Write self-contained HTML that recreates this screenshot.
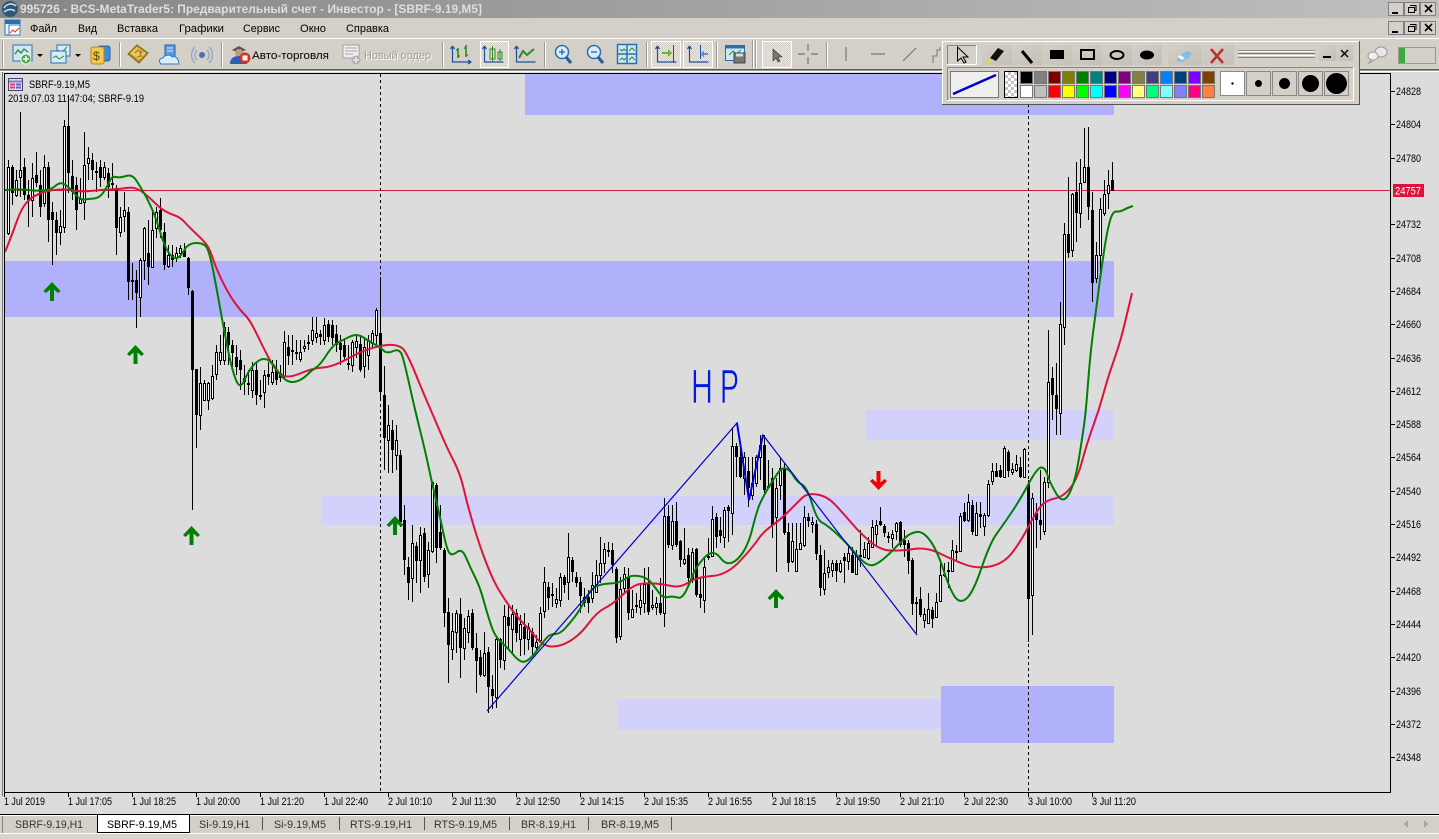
<!DOCTYPE html>
<html><head><meta charset="utf-8"><title>MetaTrader 5</title>
<style>html,body{margin:0;padding:0;background:#d4d0c8;overflow:hidden}svg{display:block}text{font-family:"Liberation Sans","Noto Sans CJK SC",sans-serif;font-size:11px}</style></head>
<body>
<svg width="1439" height="839" viewBox="0 0 1439 839" xmlns="http://www.w3.org/2000/svg">
<defs>
<linearGradient id="tb" x1="0" x2="1" y1="0" y2="0"><stop offset="0" stop-color="#868686"/><stop offset="1" stop-color="#c0c0c0"/></linearGradient>
<pattern id="dt" width="2" height="2" patternUnits="userSpaceOnUse"><rect width="2" height="2" fill="#e9e7e2"/><rect width="1" height="1" fill="#d4d0c8"/><rect x="1" y="1" width="1" height="1" fill="#d4d0c8"/></pattern>
<pattern id="ck" width="6" height="6" patternUnits="userSpaceOnUse"><rect width="6" height="6" fill="#fff"/><rect width="3" height="3" fill="#c4c4c4"/><rect x="3" y="3" width="3" height="3" fill="#c4c4c4"/></pattern>
<linearGradient id="pb" x1="0" x2="1" y1="0" y2="1"><stop offset="0" stop-color="#d4d0c8"/><stop offset="1" stop-color="#c4c0b8"/></linearGradient>
</defs>

<rect width="1439" height="839" fill="#d4d0c8"/>
<!-- title bar -->
<rect width="1439" height="18" fill="url(#tb)"/>
<circle cx="10" cy="9" r="8" fill="#2c5878"/><path d="M4 8c3-5 9-5 12-2M4 12c4-3 8-3 11-1" stroke="#cfe0ec" stroke-width="1.5" fill="none"/>
<text x="20" y="13" textLength="462" lengthAdjust="spacingAndGlyphs" font-weight="bold" fill="#dedede" style="font-size:12px">995726 - BCS-MetaTrader5: Предварительный счет - Инвестор - [SBRF-9.19,M5]</text>

<!-- window buttons -->
<g id="wb">
<g fill="#d4d0c8" stroke="#808080"><rect x="1388.500" y="2.500" width="15" height="13"/><rect x="1404.500" y="2.500" width="15" height="13"/><rect x="1420.500" y="2.500" width="15" height="13"/><rect x="1388.500" y="21.500" width="15" height="13"/><rect x="1404.500" y="21.500" width="15" height="13"/><rect x="1420.500" y="21.500" width="15" height="13"/></g>
<path d="M1392 12h6v2h-6zM1392 31h6v2h-6z" fill="#000"/>
<path d="M1410 5.500h6v5h-2M1408.500 7.500h6v5h-6zM1410 24.500h6v5h-2M1408.500 26.500h6v5h-6z" fill="none" stroke="#000"/>
<path d="M1425 5l7 7M1432 5l-7 7M1425 24l7 7M1432 24l-7 7" stroke="#000" stroke-width="1.600"/>
</g>

<!-- menu -->
<rect x="5" y="20" width="15" height="15" fill="#e8f0f8" stroke="#2a6fb0"/><rect x="5" y="20" width="15" height="4" fill="#2a6fb0"/><rect x="9" y="25" width="11" height="10" fill="#fff" stroke="#3a7fc0"/><path d="M10 33l3-3 2 2 4-4" stroke="#d04020" fill="none"/>
<g fill="#000">
<text x="30" y="32" textLength="27" lengthAdjust="spacingAndGlyphs">Файл</text>
<text x="78" y="32" textLength="19" lengthAdjust="spacingAndGlyphs">Вид</text>
<text x="117" y="32" textLength="41" lengthAdjust="spacingAndGlyphs">Вставка</text>
<text x="179" y="32" textLength="45" lengthAdjust="spacingAndGlyphs">Графики</text>
<text x="243" y="32" textLength="37" lengthAdjust="spacingAndGlyphs">Сервис</text>
<text x="300" y="32" textLength="26" lengthAdjust="spacingAndGlyphs">Окно</text>
<text x="346" y="32" textLength="43" lengthAdjust="spacingAndGlyphs">Справка</text>
</g>

<!-- toolbar -->
<rect x="0" y="38" width="1439" height="1" fill="#fff"/>
<rect x="0" y="69" width="1439" height="1.500" fill="#5c5c5c"/><rect x="0" y="71" width="1439" height="1" fill="#fff"/>
<path d="M3.500 41v26M120.500 42v25M222.500 42v25M443.500 42v25M545.500 42v25M647.500 42v25M717.500 42v25M753.500 40v28M756.500 40v28M827.500 42v25" stroke="#fff"/>
<path d="M2.500 41v26M119.500 42v25M221.500 42v25M442.500 42v25M544.500 42v25M646.500 42v25M716.500 42v25M752.500 40v28M755.500 40v28M826.500 42v25" stroke="#9a9a94"/>
<g fill="url(#dt)" stroke="#fff"><rect x="480.500" y="41.500" width="28" height="26"/><rect x="651.500" y="41.500" width="29" height="26"/><rect x="683.500" y="41.500" width="29" height="26"/><rect x="762.500" y="41.500" width="29" height="26"/></g>
<!-- new chart -->
<rect x="13" y="45" width="19" height="16" fill="#cfe6f6" stroke="#2a70b0"/><path d="M15 54l3-4 3 3 3-4 4 3" stroke="#2c8a2c" fill="none" stroke-width="1.300"/><circle cx="26" cy="59" r="5" fill="#44a844" stroke="#e8f8e8"/><path d="M23 59h6M26 56v6" stroke="#fff" stroke-width="1.500"/>
<path d="M37 54h6l-3 3z" fill="#000"/>
<rect x="57" y="45" width="13" height="11" fill="#d8ecf8" stroke="#2a70b0"/><path d="M58 50l3 3 6-6" stroke="#2c8a2c" fill="none"/><rect x="51" y="51" width="15" height="12" fill="#d8ecf8" stroke="#2a70b0"/><path d="M53 58l3-2 3 3 5-3" stroke="#2c8a2c" fill="none"/>
<path d="M75 54h6l-3 3z" fill="#000"/>
<rect x="98" y="46" width="12" height="15" rx="2" fill="#3a8ee0" stroke="#2a60a0"/><rect x="91" y="47" width="13" height="17" rx="2" fill="#f4c84c" stroke="#b08a20"/><text x="93" y="60" fill="#5a4408" style="font-size:12px">$</text>
<!-- book -->
<path d="M128 54l9-9 11 8-9 10z" fill="#b89028" stroke="#7c6418"/><path d="M130 53l7-6 9 6-7 7z" fill="#e8c860"/><path d="M135 53l3-3 4 2-2 1 1 3-4 1" fill="none" stroke="#a87c18" stroke-width="1.300"/>
<!-- cloud -->
<rect x="165" y="45" width="10" height="13" fill="#5a9ae0" stroke="#2a60a0"/><path d="M167 48h6M167 51h6" stroke="#d8ecfc"/><path d="M161 64c-3-3-1-6 2-6 1-3 8-4 9-1 4-2 7 3 7 7z" fill="#d8ecfc" stroke="#3a78c0"/>
<!-- signal -->
<circle cx="202" cy="55" r="3" fill="#4a70b8"/><g fill="none" stroke="#9aa6c4" stroke-width="1.400"><path d="M197 50a7 7 0 0 0 0 10M207 50a7 7 0 0 1 0 10"/><path d="M195 47a11 11 0 0 0 0 16M209 47a11 11 0 0 1 0 16"/></g>
<!-- auto trading -->
<path d="M232 50l7-4 7 4-7 3z" fill="#555"/><circle cx="239" cy="53" r="4" fill="#c89878"/><path d="M230 64c0-6 4-8 9-8s8 2 8 8z" fill="#2a60b8"/><circle cx="245" cy="58" r="5.500" fill="#d83020"/><rect x="242.500" y="55.500" width="5" height="5" fill="#fff"/>
<text x="252" y="59" textLength="77" lengthAdjust="spacingAndGlyphs" fill="#000">Авто-торговля</text>
<!-- new order -->
<rect x="343" y="45" width="16" height="13" fill="#eee" stroke="#a0a0a0"/><path d="M345 48h12M345 51h12M345 54h8" stroke="#a8a8a8"/><circle cx="356" cy="60" r="4.500" fill="#b0b0b0"/><path d="M353 60h6M356 57v6" stroke="#fff"/>
<text x="365" y="60" textLength="67" lengthAdjust="spacingAndGlyphs" fill="#fff">Новый ордер</text>
<text x="364" y="59" textLength="67" lengthAdjust="spacingAndGlyphs" fill="#9c9c9c">Новый ордер</text>
<!-- chart types -->
<g fill="none" stroke="#1c4f9c" stroke-width="1.200"><path d="M452.500 46v16h19M452.500 46l-2 3M452.500 46l2 3M471 62l-3-2M471 62l-3 2M484.500 46v16h19M484.500 46l-2 3M484.500 46l2 3M516.500 46v16h19M516.500 46l-2 3M516.500 46l2 3"/></g>
<path d="M458 48v10M456 50h2M458 56h2M466 45v12M464 48h2M466 55h2" stroke="#2c8a2c" stroke-width="1.600" fill="none"/>
<rect x="490" y="49" width="5" height="10" fill="none" stroke="#2c8a2c"/><rect x="498" y="52" width="4" height="7" fill="none" stroke="#2c8a2c"/><path d="M492.500 46v16M500 49v12" stroke="#2c8a2c"/>
<path d="M519 58l4-7 4 4 7-6" stroke="#2c8a2c" stroke-width="2" fill="none"/>
<!-- zoom -->
<g fill="#d8ecfc" stroke="#2a70b0" stroke-width="1.500"><circle cx="562" cy="52" r="6.500"/><circle cx="594" cy="52" r="6.500"/></g>
<path d="M559 52h6M562 49v6M591 52h6" stroke="#2a60a0" stroke-width="1.300"/>
<path d="M566 57l5 6M598 57l5 6" stroke="#2a5a98" stroke-width="3"/>
<!-- tile -->
<rect x="617.500" y="44.500" width="19" height="19" fill="#cfe6f6" stroke="#2a70b0" stroke-width="1.500"/><path d="M617 54h20M627 44v20" stroke="#2a70b0" stroke-width="1.500"/><path d="M620 49l2 2 2-2 2 2M629 51l3-3 3 3M620 60l2-2 2 2 2-2M629 60l3-3 3 3" stroke="#2c8a2c" fill="none"/>
<!-- scroll/shift -->
<g fill="none" stroke="#1c4f9c" stroke-width="1.200"><path d="M657.500 46v16h19M689.500 46v16h19M657.500 46l-2 3M657.500 46l2 3M689.500 46l-2 3M689.500 46l2 3"/></g>
<path d="M673.500 45v18M700.500 45v14" stroke="#1c4f9c"/>
<path d="M662 52h6v-3l4 4-4 4v-3h-6z" fill="#70b030"/><path d="M708 53h-4v-2.500l-4 3.500 4 3.500v-2.500h4z" fill="#5a90e0"/>
<!-- template -->
<rect x="725.500" y="45.500" width="19" height="15" fill="#cfe6f6" stroke="#2a70b0"/><rect x="725.500" y="45.500" width="19" height="3" fill="#2a70b0"/><path d="M729 55l4-4 3 3 5-4" stroke="#2c8a2c" fill="none"/><rect x="734" y="53" width="11" height="10" fill="#777" stroke="#444"/><rect x="736" y="53.500" width="7" height="3" fill="#ddd"/>
<!-- cursor etc -->
<path d="M773 49v12l3-3 2 4 2-1-2-4h4z" fill="#777" stroke="#333" stroke-width=".6"/>
<path d="M798 54h7M811 54h7M808 44v7M808 57v7" stroke="#777" stroke-width="1.200"/>
<path d="M846 47v14M871 54h14M903 61l13-13" stroke="#777" stroke-width="1.200"/>
<path d="M933 63v-7h4v-6h3v-3" stroke="#777" fill="none"/>

<!-- chart area -->
<rect x="0" y="72" width="1439" height="742" fill="#dcdcdc"/>
<path d="M2.500 72v724" stroke="#777"/>
<!-- zones -->
<g fill="#b0b0fb"><rect x="525" y="74" width="589" height="41"/><rect x="5" y="261" width="1109" height="56"/><rect x="941" y="686" width="173" height="57"/></g>
<g fill="#d1d1fc"><rect x="865" y="410" width="249" height="30"/><rect x="321" y="496" width="793" height="29"/><rect x="617" y="699" width="324" height="30"/></g>
<!-- grid dashed & bid -->
<path d="M380.500 74v719M1028.500 74v719" stroke="#000" stroke-dasharray="3 3"/>
<path d="M5 190.500h1386" stroke="#c81e46"/>

<!-- candles -->
<g transform="translate(.5 0)">
<path fill="none" stroke="#000" d="M8 160V235M12 165V205M16 170V197M20 112V197M24 158V200M28 180V227M32 163V217M36 152V187M40 170V217M44 155V207M48 162V242M52 202V265M56 212V255M60 210V245M64 120V233M68 95V193M72 160V200M76 177V230M80 178V203M84 132V220M88 147V180M92 153V180M96 162V192M100 160V187M104 162V180M108 168V198M112 163V190M116 185V255M120 207V237M124 192V232M128 207V300M132 263V300M136 270V328M140 258V317M144 227V280M148 220V285M152 212V268M156 207V238M160 198V238M164 223V270M168 245V268M172 245V267M176 247V262M180 245V258M184 243V257M188 257V295M192 290V510M196 369V448M200 367V430M204 380V400M208 382V410M212 365V400M216 345V380M220 335V365M224 322V365M228 327V365M232 340V370M236 345V375M240 350V390M244 365V395M248 370V395M252 362V398M256 362V405M260 380V400M264 370V408M268 362V385M272 360V385M276 360V385M280 365V382M284 331V380M288 335V365M292 335V365M296 340V360M300 340V362M304 340V352M308 335V350M312 317V345M316 317V343M320 330V345M324 318V345M328 320V342M332 320V345M336 325V352M340 335V365M344 340V360M348 345V370M352 340V372M356 335V358M360 335V372M364 338V378M368 335V370M372 330V348M376 308V345M380 277V400M384 366V470M388 405V473M392 420V473M396 425V470M400 450V527M404 505V575M408 557V600M412 525V602M416 542V583M420 527V593M424 528V582M428 542V588M432 481V553M436 483V563M440 505V550M444 548V627M448 598V683M452 613V660M456 610V653M460 598V678M464 618V660M468 610V643M472 609V650M476 633V693M480 650V677M484 632V677M488 647V713M492 675V709M496 638V708M500 638V668M504 605V670M508 605V650M512 605V653M516 609V642M520 615V656M524 613V655M528 623V650M532 628V655M536 635V652M540 607V642M544 567V618M548 582V610M552 583V607M556 588V608M560 573V607M564 575V593M568 533V600M572 557V582M576 572V587M580 577V613M584 588V607M588 590V613M592 572V603M596 560V593M600 537V583M604 543V573M608 542V557M612 543V573M616 567V643M620 577V640M624 567V592M628 568V620M632 590V618M636 593V613M640 585V615M644 568V613M648 567V615M652 590V610M656 597V615M660 578V615M664 498V627M668 505V548M672 505V550M676 502V547M680 540V567M684 528V565M688 548V583M692 548V583M696 548V597M700 577V608M704 557V613M708 538V560M712 506V557M716 513V548M720 517V543M724 507V548M728 505V542M732 428V535M736 443V477M740 447V478M744 452V495M748 457V507M752 457V500M756 455V487M760 435V480M764 435V493M768 460V488M772 468V538M776 478V572M780 458V500M784 463V535M788 523V572M792 523V563M796 523V572M800 523V550M804 506V547M808 513V527M812 517V533M816 520V560M820 545V596M824 550V595M828 560V578M832 560V577M836 560V582M840 560V573M844 553V583M848 545V570M852 547V573M856 550V575M860 530V567M864 542V558M868 537V560M872 520V547M876 520V547M880 507V526M884 524V537M888 532V543M892 530V548M896 522V540M900 521V547M904 530V557M908 540V574M912 558V615M916 597V633M920 587V617M924 608V628M928 593V624M932 607V628M936 593V618M940 563V602M944 563V577M948 562V588M952 540V571M956 545V560M960 513V552M964 503V522M968 494V522M972 500V535M976 502V536M980 502V528M984 513V536M988 480V517M992 463V485M996 463V477M1000 465V478M1004 446V478M1008 450V477M1012 463V475M1016 455V472M1020 457V478M1024 448V478M1028 480V642M1032 493V635M1036 503V548M1040 470V540M1044 477V535M1048 330V488M1052 367V420M1056 363V435M1060 302V435M1064 223V345M1068 177V258M1072 193V257M1076 162V242M1080 159V228M1084 128V182M1088 127V220M1092 192V302M1096 242V283M1100 198V275M1104 180V216M1108 170V209M1112 162V191"/>
<path fill="none" stroke="#000" stroke-width="3" d="M12 167V193M24 167V195M28 195V200M36 175V183M40 185V207M48 167V220M52 212V220M56 220V233M68 126V173M72 176V192M76 185V210M92 160V170M96 171V173M100 167V178M108 173V187M112 183V185M116 188V228M128 212V282M132 280V282M136 280V293M148 253V267M160 210V230M164 232V265M172 255V260M184 250V257M188 258V288M192 291V370M196 369V415M228 332V345M232 345V353M236 357V367M240 360V370M244 378V382M248 383V385M256 370V395M260 395V397M268 374V377M276 370V380M280 373V378M288 347V356M292 350V352M296 352V354M308 342V344M320 334V337M328 324V337M332 325V338M336 334V345M340 343V350M344 345V357M348 363V365M360 344V370M380 333V392M384 395V438M392 430V450M400 455V522M404 520V560M408 567V583M416 546V561M424 533V577M436 485V548M440 532V548M444 550V613M448 612V645M460 614V648M472 613V648M476 648V661M480 657V675M488 652V687M492 689V696M500 639V660M508 617V626M516 613V633M524 627V639M532 632V647M548 587V598M552 594V596M564 577V585M572 560V572M576 577V583M580 582V596M584 597V603M588 597V603M608 550V552M612 550V565M616 569V638M628 577V613M636 605V607M648 584V612M660 603V613M668 516V545M676 521V545M680 541V560M688 555V578M696 549V595M700 594V598M708 556V558M716 517V537M720 530V536M728 507V511M736 446V457M740 457V477M748 471V488M764 445V490M768 486V488M772 478V525M784 468V533M788 532V563M808 517V521M816 524V554M820 555V588M836 563V571M844 557V561M852 555V573M860 555V557M880 521V525M884 526V533M888 536V538M900 522V545M904 540V545M908 543V561M912 560V604M916 602V604M920 599V615M932 610V619M944 574V576M948 570V572M956 551V553M964 512V521M972 505V532M980 514V517M996 471V477M1000 470V477M1008 452V471M1020 467V477M1028 484V599M1036 513V520M1040 520V525M1052 378V395M1056 395V409M1068 234V253M1076 192V213M1088 167V207M1092 210V283M1112 180V191"/>
<path fill="#fff" stroke="#000" transform="translate(0 .5)" d="M7 167h2v66h-2zM15 180h2v15h-2zM19 170h2v7h-2zM31 178h2v22h-2zM43 167h2v36h-2zM59 226h2v6h-2zM63 126h2v101h-2zM79 199h2v4h-2zM83 165h2v37h-2zM87 158h2v5h-2zM103 167h2v10h-2zM119 217h2v15h-2zM123 210h2v6h-2zM139 260h2v37h-2zM143 228h2v32h-2zM151 230h2v37h-2zM155 212h2v16h-2zM167 255h2v11h-2zM175 253h2v4h-2zM179 248h2v5h-2zM199 383h2v32h-2zM203 383h2v17h-2zM207 383h2v17h-2zM211 376h2v22h-2zM215 352h2v22h-2zM219 352h2v8h-2zM223 327h2v33h-2zM251 370h2v20h-2zM263 375h2v17h-2zM271 372h2v10h-2zM283 342h2v34h-2zM299 352h2v7h-2zM303 346h2v2h-2zM311 330h2v10h-2zM315 333h2v4h-2zM323 325h2v15h-2zM351 342h2v23h-2zM355 341h2v6h-2zM363 347h2v19h-2zM367 341h2v14h-2zM371 333h2v10h-2zM375 310h2v25h-2zM387 425h2v15h-2zM395 440h2v15h-2zM411 543h2v35h-2zM419 535h2v25h-2zM427 550h2v24h-2zM431 482h2v69h-2zM451 631h2v18h-2zM455 613h2v19h-2zM463 628h2v20h-2zM467 616h2v16h-2zM483 653h2v22h-2zM495 639h2v58h-2zM503 616h2v44h-2zM511 614h2v15h-2zM519 624h2v15h-2zM527 627h2v12h-2zM535 642h2v5h-2zM539 613h2v27h-2zM543 582h2v29h-2zM555 599h2v4h-2zM559 577h2v23h-2zM567 557h2v25h-2zM591 585h2v13h-2zM595 575h2v17h-2zM599 563h2v12h-2zM603 549h2v14h-2zM619 589h2v47h-2zM623 574h2v14h-2zM631 609h2v8h-2zM639 600h2v7h-2zM643 584h2v19h-2zM651 605h2v2h-2zM655 603h2v4h-2zM663 516h2v97h-2zM671 521h2v24h-2zM683 559h2v4h-2zM691 552h2v26h-2zM703 567h2v33h-2zM711 519h2v37h-2zM723 510h2v27h-2zM731 446h2v67h-2zM743 457h2v21h-2zM751 483h2v12h-2zM755 457h2v26h-2zM759 445h2v12h-2zM775 488h2v29h-2zM779 468h2v17h-2zM791 541h2v20h-2zM795 549h2v22h-2zM799 543h2v6h-2zM803 517h2v28h-2zM811 522h2v2h-2zM823 573h2v16h-2zM827 567h2v5h-2zM831 563h2v7h-2zM839 563h2v8h-2zM847 553h2v8h-2zM855 555h2v19h-2zM863 549h2v8h-2zM867 543h2v15h-2zM871 527h2v20h-2zM875 525h2v9h-2zM891 534h2v4h-2zM895 523h2v8h-2zM923 614h2v6h-2zM927 609h2v14h-2zM935 602h2v15h-2zM939 575h2v26h-2zM951 550h2v21h-2zM959 516h2v35h-2zM967 502h2v18h-2zM975 513h2v22h-2zM983 515h2v11h-2zM987 484h2v31h-2zM991 471h2v10h-2zM1003 448h2v29h-2zM1011 469h2v3h-2zM1015 464h2v6h-2zM1023 449h2v28h-2zM1031 498h2v97h-2zM1043 482h2v49h-2zM1047 382h2v100h-2zM1059 324h2v89h-2zM1063 234h2v93h-2zM1071 194h2v56h-2zM1079 183h2v30h-2zM1083 167h2v15h-2zM1095 255h2v23h-2zM1099 209h2v46h-2zM1103 194h2v19h-2zM1107 185h2v8h-2z"/>
</g>

<!-- moving averages -->
<path class="ma" fill="none" stroke="#dc143c" stroke-width="2" stroke-linejoin="round" d="M5 252L12 235L20 212L28 200L40 193L52 190L68 189L80 192L100 190L120 189L132 187L140 190L150 198L160 208L170 214L180 217L190 228L205 242L210 250L216 268L228 293L240 310L250 320L262 345L275 370L287 379L313 368L333 367L367 348L400 343L410 360L420 385L435 420L448 450L460 473L468 507L480 547L493 580L503 597L517 617L530 630L543 646L560 647L580 635L597 612L613 604L633 585L647 583L663 584L680 588L697 577L727 575L753 547L763 532L780 520L797 503L807 493L827 496L843 513L860 533L880 550L900 551L927 547L953 560L977 569L1003 564L1020 543L1037 510L1047 500L1063 497L1077 480L1087 443L1099 410L1108 377L1120 343L1128 310L1132 293"/>
<path class="ma" fill="none" stroke="#008000" stroke-width="2" stroke-linejoin="round" d="M5 190L20 189L28 190L40 191L52 189L60 182L68 186L80 200L88 199L100 198L108 185L112 176L120 178L132 174L140 186L148 200L156 218L164 245L172 258L180 258L188 243L205 243L210 255L216 285L224 330L232 370L240 390L248 372L256 362L264 358L272 362L280 375L288 382L296 382L304 378L312 370L320 365L333 345L343 340L353 335L360 335L370 342L380 347L387 354L400 348L405 365L415 410L425 450L432 483L440 517L447 550L452 556L462 548L470 567L480 587L487 613L495 637L507 647L520 663L530 660L543 642L550 634L560 634L570 623L580 610L590 590L600 584L620 583L630 575L647 577L657 590L663 598L673 596L682 599L690 583L695 568L713 548L728 568L747 550L757 510L763 497L773 480L782 467L790 470L797 482L807 487L817 520L827 525L847 543L867 567L880 563L900 543L910 533L923 531L937 550L950 590L960 604L973 593L990 543L1003 525L1020 500L1037 468L1045 467L1050 483L1063 505L1075 483L1083 433L1086 410L1090 357L1095 317L1103 257L1108 227L1113 211L1120 212L1127 208L1133 206"/>

<!-- drawn lines -->
<path fill="none" stroke="#0000d0" stroke-width="1.200" d="M487 711L737 423L749 500L763 435L917 635"/>
<path fill="none" stroke="#0000e0" stroke-width="2" d="M737 423L749 500L763 435"/>
<g fill="#0018e0" stroke="#dcdcdc" stroke-width=".8">
<text x="691" y="403" textLength="22" lengthAdjust="spacingAndGlyphs" style="font-size:48px">H</text>
<text x="720" y="403" textLength="19" lengthAdjust="spacingAndGlyphs" style="font-size:48px">P</text>
</g>

<!-- arrows -->
<g fill="#008000">
<path id="au" d="M52 282l8.500 9-2.500 2-4-3.500V301h-4V289.500l-4 3.500-2.500-2z"/>
<path d="M135.500 345l8.500 9-2.500 2-4-3.500V364h-4V352.500l-4 3.500-2.500-2z"/>
<path d="M191.500 526l8.500 9-2.500 2-4-3.500V545h-4V533.500l-4 3.500-2.500-2z"/>
<path d="M395 516l8.500 9-2.500 2-4-3.500V535h-4V523.500l-4 3.500-2.500-2z"/>
<path d="M776 589l8.500 9-2.500 2-4-3.500V608h-4V596.500l-4 3.500-2.500-2z"/>
</g>
<path fill="#f00000" d="M878.500 490l-8.500-9 2.500-2 4 3.500V471h4V482.500l4-3.500 2.500 2z"/>

<!-- frame -->
<path d="M4.500 73v720.500M4 73.500H1390.500V793M4 792.500H1391" stroke="#000" fill="none"/>
<!-- chart header -->
<rect x="8.500" y="78.500" width="14" height="12" fill="#dcdcf0" stroke="#444470"/><path d="M9 81.500h13" stroke="#8080c0" stroke-width="2"/><path d="M10 84.500h5M10 87.500h5" stroke="#e04060" stroke-width="2"/><path d="M16 84.500h5M16 87.500h5" stroke="#6060d0" stroke-width="2"/>
<g fill="#000">
<text x="29" y="88" textLength="61" lengthAdjust="spacingAndGlyphs">SBRF-9.19,M5</text>
<text x="8" y="102" textLength="136" lengthAdjust="spacingAndGlyphs">2019.07.03 11:47:04; SBRF-9.19</text>
</g>

<!-- price axis -->
<path stroke="#000" d="M1391 91.500h4M1391 124.500h4M1391 158.500h4M1391 224.500h4M1391 258.500h4M1391 291.500h4M1391 324.500h4M1391 358.500h4M1391 391.500h4M1391 424.500h4M1391 457.500h4M1391 491.500h4M1391 524.500h4M1391 557.500h4M1391 591.500h4M1391 624.500h4M1391 657.500h4M1391 691.500h4M1391 724.500h4M1391 757.500h4"/>
<g fill="#000" style="font-size:10.500px">
<text x="1396" y="95" textLength="25" lengthAdjust="spacingAndGlyphs">24828</text>
<text x="1396" y="128" textLength="25" lengthAdjust="spacingAndGlyphs">24804</text>
<text x="1396" y="162" textLength="25" lengthAdjust="spacingAndGlyphs">24780</text>
<text x="1396" y="228" textLength="25" lengthAdjust="spacingAndGlyphs">24732</text>
<text x="1396" y="262" textLength="25" lengthAdjust="spacingAndGlyphs">24708</text>
<text x="1396" y="295" textLength="25" lengthAdjust="spacingAndGlyphs">24684</text>
<text x="1396" y="328" textLength="25" lengthAdjust="spacingAndGlyphs">24660</text>
<text x="1396" y="362" textLength="25" lengthAdjust="spacingAndGlyphs">24636</text>
<text x="1396" y="395" textLength="25" lengthAdjust="spacingAndGlyphs">24612</text>
<text x="1396" y="428" textLength="25" lengthAdjust="spacingAndGlyphs">24588</text>
<text x="1396" y="461" textLength="25" lengthAdjust="spacingAndGlyphs">24564</text>
<text x="1396" y="495" textLength="25" lengthAdjust="spacingAndGlyphs">24540</text>
<text x="1396" y="528" textLength="25" lengthAdjust="spacingAndGlyphs">24516</text>
<text x="1396" y="561" textLength="25" lengthAdjust="spacingAndGlyphs">24492</text>
<text x="1396" y="595" textLength="25" lengthAdjust="spacingAndGlyphs">24468</text>
<text x="1396" y="628" textLength="25" lengthAdjust="spacingAndGlyphs">24444</text>
<text x="1396" y="661" textLength="25" lengthAdjust="spacingAndGlyphs">24420</text>
<text x="1396" y="695" textLength="25" lengthAdjust="spacingAndGlyphs">24396</text>
<text x="1396" y="728" textLength="25" lengthAdjust="spacingAndGlyphs">24372</text>
<text x="1396" y="761" textLength="25" lengthAdjust="spacingAndGlyphs">24348</text>
</g>
<rect x="1393" y="184" width="31" height="13" fill="#dc143c"/>
<text x="1395" y="194.500" textLength="26" lengthAdjust="spacingAndGlyphs" fill="#fff">24757</text>

<!-- time axis -->
<path stroke="#000" d="M4.500 793v4M68.500 793v4M132.500 793v4M196.500 793v4M260.500 793v4M324.500 793v4M388.500 793v4M452.500 793v4M516.500 793v4M580.500 793v4M644.500 793v4M708.500 793v4M772.500 793v4M836.500 793v4M900.500 793v4M964.500 793v4M1028.500 793v4M1092.500 793v4"/>
<g fill="#000">
<text x="4" y="805" textLength="41" lengthAdjust="spacingAndGlyphs">1 Jul 2019</text>
<text x="68" y="805" textLength="44" lengthAdjust="spacingAndGlyphs">1 Jul 17:05</text>
<text x="132" y="805" textLength="44" lengthAdjust="spacingAndGlyphs">1 Jul 18:25</text>
<text x="196" y="805" textLength="44" lengthAdjust="spacingAndGlyphs">1 Jul 20:00</text>
<text x="260" y="805" textLength="44" lengthAdjust="spacingAndGlyphs">1 Jul 21:20</text>
<text x="324" y="805" textLength="44" lengthAdjust="spacingAndGlyphs">1 Jul 22:40</text>
<text x="388" y="805" textLength="44" lengthAdjust="spacingAndGlyphs">2 Jul 10:10</text>
<text x="452" y="805" textLength="44" lengthAdjust="spacingAndGlyphs">2 Jul 11:30</text>
<text x="516" y="805" textLength="44" lengthAdjust="spacingAndGlyphs">2 Jul 12:50</text>
<text x="580" y="805" textLength="44" lengthAdjust="spacingAndGlyphs">2 Jul 14:15</text>
<text x="644" y="805" textLength="44" lengthAdjust="spacingAndGlyphs">2 Jul 15:35</text>
<text x="708" y="805" textLength="44" lengthAdjust="spacingAndGlyphs">2 Jul 16:55</text>
<text x="772" y="805" textLength="44" lengthAdjust="spacingAndGlyphs">2 Jul 18:15</text>
<text x="836" y="805" textLength="44" lengthAdjust="spacingAndGlyphs">2 Jul 19:50</text>
<text x="900" y="805" textLength="44" lengthAdjust="spacingAndGlyphs">2 Jul 21:10</text>
<text x="964" y="805" textLength="44" lengthAdjust="spacingAndGlyphs">2 Jul 22:30</text>
<text x="1028" y="805" textLength="44" lengthAdjust="spacingAndGlyphs">3 Jul 10:00</text>
<text x="1092" y="805" textLength="44" lengthAdjust="spacingAndGlyphs">3 Jul 11:20</text>
</g>

<!-- tabs -->
<rect x="0" y="814" width="1439" height="1" fill="#000"/>
<rect x="0" y="815" width="1439" height="1" fill="#fff"/>
<rect x="0" y="816" width="1439" height="23" fill="#d4d0c8"/>
<rect x="0" y="833" width="1439" height="1" fill="#fff"/>
<rect x="0" y="834" width="1439" height="5" fill="#d8d4cc"/>
<path d="M2.500 816v17" stroke="#888"/>
<rect x="97.500" y="814.500" width="92" height="18" fill="#fff" stroke="#000"/>
<path d="M262.500 817v13M339.500 817v13M424.500 817v13M509.500 817v13M588.500 817v13M671.500 817v13" stroke="#555"/>
<text x="15" y="828" textLength="68" lengthAdjust="spacingAndGlyphs" fill="#333">SBRF-9.19,H1</text>
<text x="107" y="828" textLength="70" lengthAdjust="spacingAndGlyphs" fill="#000">SBRF-9.19,M5</text>
<g fill="#333">
<text x="199" y="828" textLength="51" lengthAdjust="spacingAndGlyphs">Si-9.19,H1</text>
<text x="274" y="828" textLength="52" lengthAdjust="spacingAndGlyphs">Si-9.19,M5</text>
<text x="350" y="828" textLength="62" lengthAdjust="spacingAndGlyphs">RTS-9.19,H1</text>
<text x="434" y="828" textLength="63" lengthAdjust="spacingAndGlyphs">RTS-9.19,M5</text>
<text x="521" y="828" textLength="55" lengthAdjust="spacingAndGlyphs">BR-8.19,H1</text>
<text x="601" y="828" textLength="58" lengthAdjust="spacingAndGlyphs">BR-8.19,M5</text>
</g>
<path d="M1404 824l4-4v8zM1424 820l4 4-4 4z" fill="#a8a8a0"/>

<!-- right of toolbar -->
<ellipse cx="1381" cy="52" rx="6" ry="5" fill="#e8e8e8" stroke="#999"/><ellipse cx="1373" cy="56" rx="5" ry="4" fill="#f0f0f0" stroke="#999"/><path d="M1371 60l-2 3 4-2" fill="#ddd" stroke="#999"/>
<rect x="1398.500" y="47.500" width="37" height="16" fill="#d4d0c8" stroke="#999"/><rect x="1399" y="48" width="6" height="15" fill="#3caa3c"/>

<!-- floating drawing toolbar -->
<rect x="942" y="41" width="417" height="63" fill="#d4d0c8"/>
<path d="M942.500 104V41.500H1359" stroke="#fff" fill="none"/>
<path d="M942 104.500H1359.500V41" stroke="#555" fill="none"/>
<g fill="url(#pb)"><rect x="982" y="45" width="30" height="20"/><rect x="1012" y="45" width="30" height="20"/><rect x="1042" y="45" width="30" height="20"/><rect x="1072" y="45" width="30" height="20"/><rect x="1102" y="45" width="30" height="20"/><rect x="1132" y="45" width="30" height="20"/><rect x="1168" y="45" width="33" height="20"/><rect x="1201" y="45" width="33" height="20"/><rect x="1319" y="45" width="17" height="16"/><rect x="1336" y="45" width="17" height="16"/></g>
<path d="M947.500 64V45.500H976" stroke="#888" fill="none"/><path d="M947 64.500H976.500V45" stroke="#fff" fill="none"/>
<path d="M957.500 47v14l3.500-3 3 5 2-1-3-5h5z" fill="#d4d0c8" stroke="#000"/>
<path d="M990 58l8-10 6 3-8 10z" fill="#111"/><path d="M989 58l3 3-4 2z" fill="#e8e020"/>
<path d="M1022 51l10 12" stroke="#000" stroke-width="3"/>
<rect x="1050" y="50" width="14" height="9" fill="#000"/>
<rect x="1081" y="50" width="13" height="9" fill="none" stroke="#000" stroke-width="2"/>
<ellipse cx="1117" cy="55" rx="6.500" ry="4" fill="none" stroke="#000" stroke-width="2"/>
<ellipse cx="1147" cy="55" rx="7" ry="4.500" fill="#000"/>
<path d="M1177 57l10-6 5 2-2 4-8 5-5-1z" fill="#7cc0ee"/><path d="M1177 57l5 3 3-2-5-3z" fill="#f0f4f8"/>
<path d="M1211 49l12 14M1223 49l-12 14" stroke="#c03030" stroke-width="2.600"/>
<path d="M1238 50.500h77M1238 57.500h77" stroke="#888"/><path d="M1238 53.500h77" stroke="#777"/><path d="M1238 51.500h77M1238 55.500h77" stroke="#fff"/>
<rect x="1323" y="56" width="8" height="2" fill="#000"/>
<path d="M1341 50l7 7M1348 50l-7 7" stroke="#000" stroke-width="1.400"/>
<path d="M947.500 100V67.500H1353" stroke="#888" fill="none"/><path d="M947 100.500H1353.500V67" stroke="#fff" fill="none"/>
<rect x="950.500" y="71.500" width="48" height="26" fill="#efefef" stroke="#777"/><path d="M953 94l43-19" stroke="#0000c0" stroke-width="2.500"/>
<rect x="1004.500" y="71.500" width="13" height="26" fill="url(#ck)" stroke="#000"/>
<g stroke="#777">
<rect x="1020.500" y="71.500" width="12" height="12" fill="#000"/><rect x="1034.500" y="71.500" width="12" height="12" fill="#808080"/><rect x="1048.500" y="71.500" width="12" height="12" fill="#800000"/><rect x="1062.500" y="71.500" width="12" height="12" fill="#808000"/><rect x="1076.500" y="71.500" width="12" height="12" fill="#008000"/><rect x="1090.500" y="71.500" width="12" height="12" fill="#008080"/><rect x="1104.500" y="71.500" width="12" height="12" fill="#000080"/><rect x="1118.500" y="71.500" width="12" height="12" fill="#800080"/><rect x="1132.500" y="71.500" width="12" height="12" fill="#808040"/><rect x="1146.500" y="71.500" width="12" height="12" fill="#404080"/><rect x="1160.500" y="71.500" width="12" height="12" fill="#0080ff"/><rect x="1174.500" y="71.500" width="12" height="12" fill="#004080"/><rect x="1188.500" y="71.500" width="12" height="12" fill="#8000ff"/><rect x="1202.500" y="71.500" width="12" height="12" fill="#804000"/>
<rect x="1020.500" y="85.500" width="12" height="12" fill="#fff"/><rect x="1034.500" y="85.500" width="12" height="12" fill="#c0c0c0"/><rect x="1048.500" y="85.500" width="12" height="12" fill="#f00"/><rect x="1062.500" y="85.500" width="12" height="12" fill="#ff0"/><rect x="1076.500" y="85.500" width="12" height="12" fill="#0f0"/><rect x="1090.500" y="85.500" width="12" height="12" fill="#0ff"/><rect x="1104.500" y="85.500" width="12" height="12" fill="#00f"/><rect x="1118.500" y="85.500" width="12" height="12" fill="#f0f"/><rect x="1132.500" y="85.500" width="12" height="12" fill="#ffff80"/><rect x="1146.500" y="85.500" width="12" height="12" fill="#00ff80"/><rect x="1160.500" y="85.500" width="12" height="12" fill="#80ffff"/><rect x="1174.500" y="85.500" width="12" height="12" fill="#8080ff"/><rect x="1188.500" y="85.500" width="12" height="12" fill="#ff0080"/><rect x="1202.500" y="85.500" width="12" height="12" fill="#ff8040"/>
</g>
<g stroke="#888"><rect x="1220.500" y="71.500" width="24" height="24" fill="#fff"/><rect x="1246.500" y="71.500" width="24" height="24" fill="#d4d0c8"/><rect x="1272.500" y="71.500" width="24" height="24" fill="#d4d0c8"/><rect x="1298.500" y="71.500" width="24" height="24" fill="#d4d0c8"/><rect x="1324.500" y="71.500" width="24" height="24" fill="#d4d0c8"/></g>
<circle cx="1232.500" cy="83.500" r="1.200"/><circle cx="1258.500" cy="83.500" r="3.500"/><circle cx="1284.500" cy="83.500" r="5.500"/><circle cx="1310.500" cy="83.500" r="8.500"/><circle cx="1336.500" cy="83.500" r="10.500"/>
</svg>
<script>
document.querySelectorAll('.ma').forEach(function(p){
  var a=p.getAttribute('d').slice(1).split('L').map(function(s){return s.trim().split(' ').map(Number)});
  var d='M'+a[0].join(' ');
  for(var i=1;i<a.length-1;i++){d+='Q'+a[i].join(' ')+' '+((a[i][0]+a[i+1][0])/2)+' '+((a[i][1]+a[i+1][1])/2)}
  d+='L'+a[a.length-1].join(' ');
  p.setAttribute('d',d);
});
</script>
</body></html>
